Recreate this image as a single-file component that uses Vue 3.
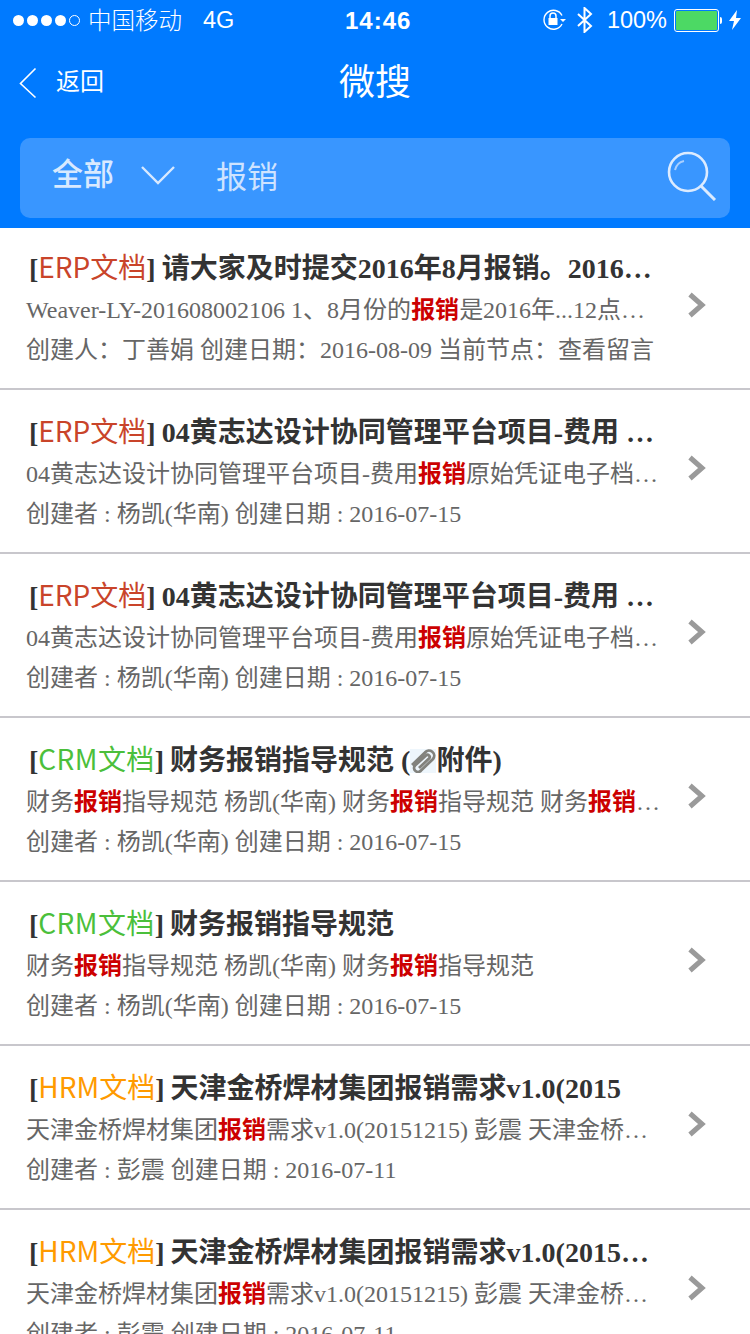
<script setup>
const S = '报销'
const rows = [
  { tag: 'ERP文档', cls: 'erp', title: '请大家及时提交2016年8月报销。2016…',
    sub: ['Weaver-LY-201608002106 1、8月份的', S, '是2016年...12点…'],
    meta: '创建人：丁善娟 创建日期：2016-08-09 当前节点：查看留言' },
  { tag: 'ERP文档', cls: 'erp', title: '04黄志达设计协同管理平台项目-费用 …',
    sub: ['04黄志达设计协同管理平台项目-费用', S, '原始凭证电子档…'],
    meta: '创建者 : 杨凯(华南) 创建日期 : 2016-07-15' },
  { tag: 'ERP文档', cls: 'erp', title: '04黄志达设计协同管理平台项目-费用 …',
    sub: ['04黄志达设计协同管理平台项目-费用', S, '原始凭证电子档…'],
    meta: '创建者 : 杨凯(华南) 创建日期 : 2016-07-15' },
  { tag: 'CRM文档', cls: 'crm', title: '财务报销指导规范 (', attach: true,
    sub: ['财务', S, '指导规范 杨凯(华南) 财务', S, '指导规范 财务', S, '…'],
    meta: '创建者 : 杨凯(华南) 创建日期 : 2016-07-15' },
  { tag: 'CRM文档', cls: 'crm', title: '财务报销指导规范',
    sub: ['财务', S, '指导规范 杨凯(华南) 财务', S, '指导规范'],
    meta: '创建者 : 杨凯(华南) 创建日期 : 2016-07-15' },
  { tag: 'HRM文档', cls: 'hrm', title: '天津金桥焊材集团报销需求v1.0(2015',
    sub: ['天津金桥焊材集团', S, '需求v1.0(20151215) 彭震 天津金桥…'],
    meta: '创建者 : 彭震 创建日期 : 2016-07-11' },
  { tag: 'HRM文档', cls: 'hrm', title: '天津金桥焊材集团报销需求v1.0(2015…',
    sub: ['天津金桥焊材集团', S, '需求v1.0(20151215) 彭震 天津金桥…'],
    meta: '创建者 : 彭震 创建日期 : 2016-07-11' }
]
</script>

<template>
  <div class="page">
    <header class="head">
      <div class="status">
        <div class="status-left">
          <span class="dots"><i v-for="n in 4" :key="n" class="dot"></i><i class="dot hollow"></i></span>
          <span class="carrier">中国移动</span>
          <span class="net">4G</span>
        </div>
        <div class="time">14:46</div>
        <div class="status-right">
          <svg class="lock" width="25" height="22" viewBox="0 0 25 22">
            <path d="M20 6.500A9.500 9.500 0 1 0 20 15" fill="none" stroke="#fff" stroke-width="1.400"/>
            <path d="M18 10h6l-3 3z" fill="#fff"/>
            <rect x="6.500" y="9" width="9" height="7" fill="#fff"/>
            <path d="M8 9V7a3 3 0 0 1 6 0v2" fill="none" stroke="#fff" stroke-width="1.500"/>
          </svg>
          <svg class="bt" width="16" height="26" viewBox="0 0 16 26">
            <path d="M1 7l13 12-6.500 6V1L14 7 1 19" fill="none" stroke="#fff" stroke-width="2"/>
          </svg>
          <span class="pct">100%</span>
          <span class="battery"><span class="fill"></span></span>
          <span class="nub"></span>
          <svg class="bolt" width="12" height="20" viewBox="0 0 12 20">
            <path d="M8 0L0 11h5l-2 9 9-12H7z" fill="#fff"/>
          </svg>
        </div>
      </div>
      <div class="nav">
        <div class="back">
          <svg width="20" height="32" viewBox="0 0 20 32">
            <path d="M17.500 1.500L2.500 16.500l15 14" fill="none" stroke="#fff" stroke-width="1.600"/>
          </svg>
          <span class="back-label">返回</span>
        </div>
        <div class="nav-title">微搜</div>
      </div>
      <div class="search">
        <span class="scope">全部</span>
        <svg class="caret" width="36" height="20" viewBox="0 0 36 20">
          <path d="M2 2l16 16L34 2" fill="none" stroke="#d8e9ff" stroke-width="2.400"/>
        </svg>
        <span class="query">报销</span>
        <svg class="glass" width="50" height="50" viewBox="0 0 50 50">
          <circle cx="21" cy="21" r="19" fill="none" stroke="#dcebff" stroke-width="2.600"/>
          <path d="M8 19a12 12 0 0 1 9-9" fill="none" stroke="#a9cfff" stroke-width="2"/>
          <path d="M34 35l14 14" fill="none" stroke="#dcebff" stroke-width="3"/>
        </svg>
      </div>
    </header>

    <ul class="list">
      <li v-for="(r, i) in rows" :key="i" class="row">
        <div class="body">
          <div class="title">
            <span class="br">[</span><span class="tag" :class="r.cls">{{ r.tag }}</span><span class="br">]</span>
            <b class="t-text">{{ r.title }}<template v-if="r.attach"><svg class="clip" width="26" height="24" viewBox="0 0 26 24"><rect width="26" height="24" fill="#eef6fc"/><path d="M2 16L15 3.500a5 5 0 0 1 8 6.500L11 21.500a3.500 3.500 0 0 1-6-5L16 6.500a2 2 0 0 1 3 3L9 19" fill="none" stroke="#82827d" stroke-width="2.800"/></svg>附件)</template></b>
          </div>
          <div class="sub">
            <template v-for="(p, j) in r.sub" :key="j"><em v-if="p === S">{{ p }}</em><template v-else>{{ p }}</template></template>
          </div>
          <div class="meta">{{ r.meta }}</div>
        </div>
        <svg class="chev" width="20" height="26" viewBox="0 0 20 26">
          <path d="M3 2.500L15 13 3 23.500" fill="none" stroke="#9a9a9a" stroke-width="5"/>
        </svg>
      </li>
    </ul>
  </div>
</template>

<style>
html, body { margin: 0; padding: 0; background: #fff; }
</style>

<style scoped>
.page {
  width: 750px;
  height: 1334px;
  overflow: hidden;
  background: #fff;
  font-family: "Liberation Serif", "Noto Sans CJK SC", serif;
}
.head {
  height: 228px;
  background: #007aff;
  color: #fff;
  font-family: "Liberation Sans", "Noto Sans CJK SC", sans-serif;
  box-sizing: border-box;
  padding-bottom: 10px;
  display: flex;
  flex-direction: column;
}
.status {
  height: 40px;
  position: relative;
  display: flex;
  align-items: center;
  justify-content: space-between;
  padding: 0 9px 0 13px;
  font-size: 23.5px;
}
.status-left, .status-right { display: flex; align-items: center; }
.dots { display: flex; gap: 3px; margin-right: 8px; }
.dot { width: 11px; height: 11px; border-radius: 50%; background: #fff; box-sizing: border-box; display: block; }
.dot.hollow { background: none; border: 1px solid #fff; }
.carrier { font-weight: 300; margin-top: -2px; }
.net { margin-left: 21px; margin-top: 1px; }
.time {
  position: absolute;
  left: 345px;
  top: 6px;
  font-size: 24px;
  font-weight: 700;
  letter-spacing: 1px;
  line-height: 30px;
}
.lock { margin-right: 10px; }
.bt { margin-right: 14px; }
.pct { margin-right: 7px; margin-top: 1px; }
.battery {
  width: 41px; height: 19px;
  border: 1px solid #fff;
  border-radius: 3px;
  padding: 1px;
  display: block;
}
.fill { display: block; width: 100%; height: 100%; background: #4cd964; border-radius: 1px; }
.nub { width: 2px; height: 7px; background: #fff; margin: 0 7px 0 1px; border-radius: 0 2px 2px 0; }
.nav {
  height: 80px;
  position: relative;
  display: flex;
  align-items: center;
  justify-content: center;
  margin-bottom: 18px;
}
.back {
  position: absolute;
  left: 18px;
  top: 27px;
  display: flex;
  align-items: center;
  gap: 18px;
  font-size: 24px;
  height: 32px;
}
.back-label { margin-top: -8px; }
.nav-title { font-size: 36px; line-height: 44px; margin-top: 5px; }
.search {
  margin: 0 20px;
  height: 80px;
  border-radius: 10px;
  background: #3996ff;
  display: flex;
  align-items: center;
  position: relative;
  padding-left: 32px;
}
.scope { font-size: 31px; color: #d8e9ff; font-weight: 500; width: 64px; margin-top: -14px; white-space: nowrap; }
.caret { margin-left: 24px; margin-top: -6px; }
.query { font-size: 31px; color: #cfe3ff; margin-left: 40px; margin-top: -8px; }
.glass { position: absolute; right: 13px; top: 13px; }
.list { list-style: none; margin: 0; padding: 0; }
.row {
  height: 162px;
  border-bottom: 2px solid #c8c7cc;
  display: flex;
  align-items: flex-start;
  position: relative;
}
.row:first-child { height: 160px; }
.body { width: 640px; margin-left: 26px; padding-top: 22px; min-width: 0; }
.row:first-child .body { padding-top: 20px; }
.title {
  height: 40px;
  line-height: 40px;
  font-size: 28px;
  color: #333;
  white-space: nowrap;
  padding-left: 3px;
  margin-top: -2px;
}
.br { font-weight: 700; }
.tag { font-family: "Noto Sans CJK SC", sans-serif; }
.erp { color: #c9442a; }
.crm { color: #4bbf3b; letter-spacing: 0.4px; }
.hrm { color: #ff9a00; }
.t-text { margin-left: 6px; }
.clip { vertical-align: -3px; }
.sub, .meta {
  font-size: 24px;
  color: #666;
  white-space: nowrap;
}
.sub { height: 40px; line-height: 40px; margin-top: 4px; }
.sub em { font-style: normal; font-weight: 700; color: #c00; }
.meta { height: 40px; line-height: 40px; }
.chev { position: absolute; left: 687px; top: 65px; }
.row:first-child .chev { top: 64px; }
</style>
